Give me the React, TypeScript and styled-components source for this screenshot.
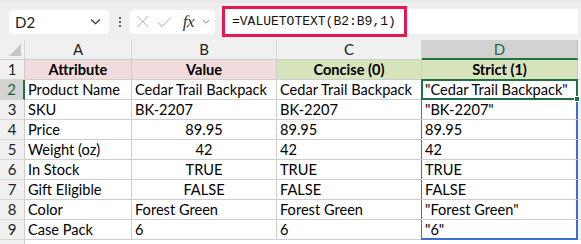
import React from "react";
import styled, { createGlobalStyle, css } from "styled-components";

const Global = createGlobalStyle`
  html, body { margin: 0; padding: 0; background: #f3f3f3; }
  body { font-family: "Lato", "Liberation Sans", sans-serif; }
  * { box-sizing: border-box; }
`;

const Page = styled.div`
  width: 581px;
  height: 244px;
  overflow: hidden;
  background: #f3f3f3;
`;

const Toolbar = styled.div`
  height: 40px;
  display: flex;
  align-items: center;
  padding: 0 3px 0 9px;
  background: #efefef;
  border-top: 3px solid #e9e9e9;
`;

const NameBox = styled.div`
  width: 100px;
  height: 24px;
  background: #fff;
  border-radius: 4px;
  display: flex;
  align-items: center;
  justify-content: space-between;
  padding: 0 7px 0 6px;
  font-family: "Lato", "Liberation Sans", sans-serif;
  font-size: 15px;
  color: #222;
`;

const Dots = styled.div`
  width: 21px;
  display: flex;
  flex-direction: column;
  align-items: center;
  gap: 2px;
  span {
    width: 2px;
    height: 2px;
    background: #333;
    border-radius: 1px;
  }
`;

const FxBox = styled.div`
  width: 85px;
  height: 24px;
  background: #fff;
  border-radius: 4px;
  display: flex;
  align-items: center;
  padding: 0 4px 0 6px;
  gap: 7px;
  margin-right: 7px;
`;

const FxText = styled.span`
  font-family: "Liberation Serif", serif;
  font-style: italic;
  font-size: 17px;
  color: #333;
  margin-left: 4px;
  letter-spacing: -0.5px;
`;

const FormulaField = styled.div`
  flex: 1;
  height: 25px;
  background: #fff;
  display: flex;
  align-items: center;
`;

const Highlight = styled.div`
  height: 31px;
  width: 185px;
  border: 3px solid #e5194f;
  display: flex;
  align-items: center;
  padding-left: 7px;
  font-family: "Liberation Mono", monospace;
  font-size: 13px;
  color: #111;
  background: #fff;
`;

const Grid = styled.div`
  display: grid;
  grid-template-columns: 25px 107px 145px 145px 156px 3px;
  grid-auto-rows: 20px;
  background: #fff;
`;

type CellProps = {
  $kind?: "head" | "rowhead" | "corner" | "data" | "filler";
  $sel?: boolean;
  $bg?: string;
  $align?: "left" | "center";
  $bold?: boolean;
  $spill?: "mid" | "end";
  $active?: boolean;
};

const Cell = styled.div<CellProps>`
  position: relative;
  border-right: 1px solid #cdcdcd;
  border-bottom: 1px solid #cdcdcd;
  font-size: 14.6px;
  line-height: 19px;
  color: #000;
  white-space: nowrap;
  overflow: visible;
  padding: 0 3px;
  display: flex;
  align-items: center;
  justify-content: ${(p) => (p.$align === "center" ? "center" : "flex-start")};
  background: ${(p) => p.$bg || "#fff"};
  font-weight: ${(p) => (p.$bold ? 700 : 400)};

  ${(p) =>
    p.$kind === "head" &&
    css`
      background: ${p.$sel ? "#d2d2d2" : "#f0f0f0"};
      color: ${p.$sel ? "#1e6b3e" : "#222"};
      justify-content: center;
      font-size: 15px;
      border-right-color: ${p.$sel ? "#bdbdbd" : "#d6d6d6"};
      border-bottom: ${p.$sel ? "2px solid #217346" : "1px solid #cdcdcd"};
    `}

  ${(p) =>
    p.$kind === "rowhead" &&
    css`
      background: ${p.$sel ? "#d2d2d2" : "#f0f0f0"};
      color: ${p.$sel ? "#1e6b3e" : "#222"};
      justify-content: center;
      font-size: 15px;
      border-right: ${p.$sel ? "2px solid #217346" : "1px solid #cdcdcd"};
      border-bottom-color: #d6d6d6;
    `}

  ${(p) =>
    p.$kind === "corner" &&
    css`
      background: #f0f0f0;
      border-right-color: #d6d6d6;
    `}

  ${(p) =>
    p.$kind === "filler" &&
    css`
      background: #f3f3f3;
      border-right: none;
      border-bottom-color: #e0e0e0;
    `}

  ${(p) =>
    p.$spill &&
    css`
      box-shadow: inset 1px 0 0 #3c6fd1, inset -1px 0 0 #3c6fd1
        ${p.$spill === "end" ? ", inset 0 -1px 0 #3c6fd1" : ""};
      border-right-color: #3c6fd1;
      margin-left: -1px;
      padding-left: 4px;
      ${p.$spill === "end" && "border-bottom-color: #3c6fd1;"}
    `}

  ${(p) =>
    p.$active &&
    css`
      &::after {
        content: "";
        position: absolute;
        left: -1px;
        top: -1px;
        right: -1px;
        bottom: -1px;
        border: 2px solid #1e7145;
        pointer-events: none;
      }
    `}
`;

const CornerTriangle = styled.div`
  position: absolute;
  right: 3px;
  bottom: 3px;
  width: 0;
  height: 0;
  border-left: 12px solid transparent;
  border-bottom: 12px solid #c6c6c6;
`;

const FillHandle = styled.div`
  position: absolute;
  right: -3px;
  bottom: -3px;
  width: 6px;
  height: 6px;
  background: #1e7145;
  border: 1px solid #fff;
  z-index: 2;
`;

const Chevron = ({ color = "#444", size = 12 }: { color?: string; size?: number }) => (
  <svg width={size} height={size} viewBox="0 0 12 12">
    <path d="M2 4.2 L6 8 L10 4.2" fill="none" stroke={color} strokeWidth="1.2" />
  </svg>
);

const XIcon = () => (
  <svg width="15" height="15" viewBox="0 0 15 15">
    <path d="M1.5 1.5 L13.5 13.5 M13.5 1.5 L1.5 13.5" stroke="#c4c4c4" strokeWidth="1.2" fill="none" />
  </svg>
);

const CheckIcon = () => (
  <svg width="17" height="14" viewBox="0 0 17 14">
    <path d="M1 7.5 L5.5 12 L16 1.5" stroke="#c4c4c4" strokeWidth="1.2" fill="none" />
  </svg>
);

type Row = {
  a: string;
  b: string;
  bCenter?: boolean;
  c: string;
  d: string;
};

const rows: Row[] = [
  { a: "Product Name", b: "Cedar Trail Backpack", c: "Cedar Trail Backpack", d: '"Cedar Trail Backpack"' },
  { a: "SKU", b: "BK-2207", c: "BK-2207", d: '"BK-2207"' },
  { a: "Price", b: "89.95", bCenter: true, c: "89.95", d: "89.95" },
  { a: "Weight (oz)", b: "42", bCenter: true, c: "42", d: "42" },
  { a: "In Stock", b: "TRUE", bCenter: true, c: "TRUE", d: "TRUE" },
  { a: "Gift Eligible", b: "FALSE", bCenter: true, c: "FALSE", d: "FALSE" },
  { a: "Color", b: "Forest Green", c: "Forest Green", d: '"Forest Green"' },
  { a: "Case Pack", b: "6", c: "6", d: '"6"' },
];

export default function App() {
  return (
    <Page>
      <Global />
      <Toolbar>
        <NameBox>
          <span>D2</span>
          <Chevron color="#333" size={13} />
        </NameBox>
        <Dots>
          <span />
          <span />
          <span />
        </Dots>
        <FxBox>
          <XIcon />
          <CheckIcon />
          <FxText>fx</FxText>
          <Chevron color="#888" size={11} />
        </FxBox>
        <FormulaField>
          <Highlight>=VALUETOTEXT(B2:B9,1)</Highlight>
        </FormulaField>
      </Toolbar>
      <Grid>
        <Cell $kind="corner">
          <CornerTriangle />
        </Cell>
        <Cell $kind="head">A</Cell>
        <Cell $kind="head">B</Cell>
        <Cell $kind="head">C</Cell>
        <Cell $kind="head" $sel>
          D
        </Cell>
        <Cell $kind="filler" />

        <Cell $kind="rowhead">1</Cell>
        <Cell $bg="#f2dcdb" $bold $align="center">Attribute</Cell>
        <Cell $bg="#f2dcdb" $bold $align="center">Value</Cell>
        <Cell $bg="#d8e4bc" $bold $align="center">Concise (0)</Cell>
        <Cell $bg="#d8e4bc" $bold $align="center">Strict (1)</Cell>
        <Cell $kind="filler" />

        {rows.map((r, i) => {
          const n = i + 2;
          const first = i === 0;
          const last = i === rows.length - 1;
          return (
            <React.Fragment key={n}>
              <Cell $kind="rowhead" $sel={first}>
                {n}
              </Cell>
              <Cell>{r.a}</Cell>
              <Cell $align={r.bCenter ? "center" : "left"}>{r.b}</Cell>
              <Cell>{r.c}</Cell>
              <Cell $active={first} $spill={first ? undefined : last ? "end" : "mid"}>
                {r.d}
                {first && <FillHandle />}
              </Cell>
              <Cell $kind="filler" />
            </React.Fragment>
          );
        })}
        <Cell $kind="rowhead" />
      </Grid>
    </Page>
  );
}
